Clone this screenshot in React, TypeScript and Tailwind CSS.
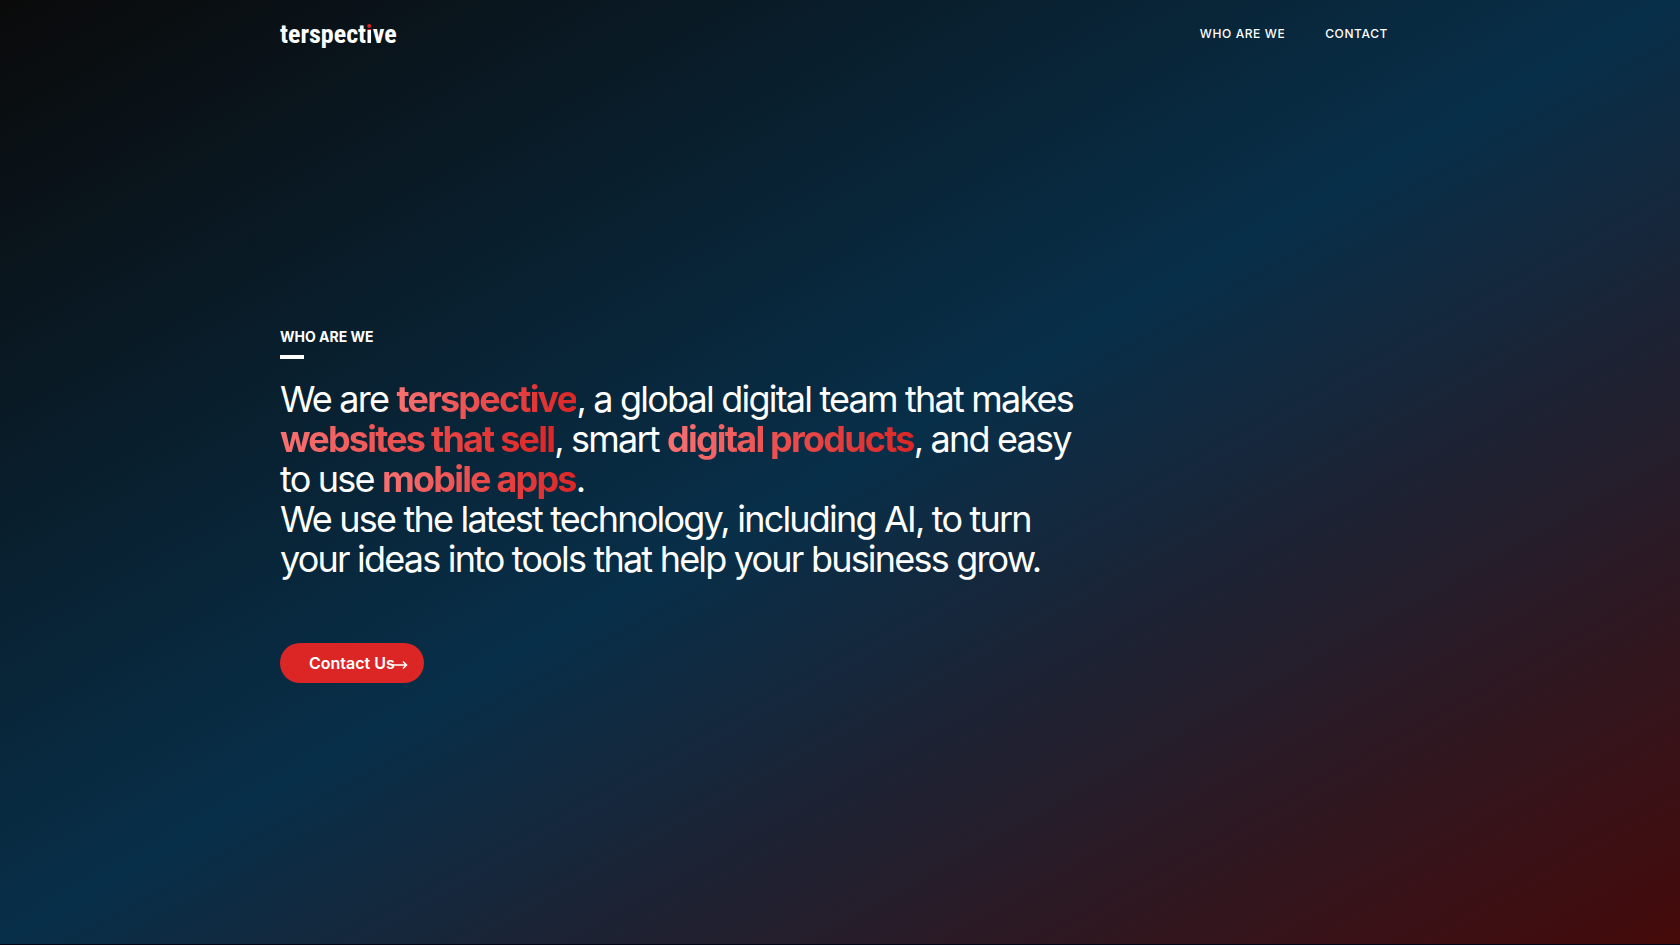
import React from "react";

function Accent({ children }: { children: React.ReactNode }) {
  return (
    <strong className="bg-linear-to-r/srgb from-[#f87171] to-[#dc2626] bg-clip-text font-bold text-transparent">
      {children}
    </strong>
  );
}

function Logo() {
  return (
    <a
      href="#"
      className="font-['Roboto_Condensed','Liberation_Sans_Narrow','Liberation_Sans',sans-serif] text-[26px] leading-8 font-bold text-white"
    >
      terspect
      <span className="bg-linear-to-b from-[#dc2626] from-38% to-white to-38% bg-clip-text text-transparent">i</span>
      ve
    </a>
  );
}

export default function App() {
  return (
    <div className="bg-[#020617] pb-px font-['Inter',sans-serif] text-white">
      <div className="flex min-h-[calc(100vh-1px)] flex-col bg-linear-to-br/srgb from-[#0a0a0a] via-[#082f49] to-[#450a0a]">
        <header className="mx-auto flex h-17 w-full max-w-280 items-center justify-between">
          <Logo />
          <nav className="flex gap-10 pr-3 text-xs font-medium tracking-wider">
            <a href="#who">WHO ARE WE</a>
            <a href="#contact">CONTACT</a>
          </nav>
        </header>
        <main id="who" className="mx-auto flex w-full max-w-280 grow flex-col items-start justify-center pb-0.5">
          <h2 className="text-sm font-bold">WHO ARE WE</h2>
          <span className="mt-2 h-1 w-6 bg-white" />
          <p className="mt-5 max-w-200 text-4xl leading-10 tracking-tighter">
            We are <Accent>terspective</Accent>, a global digital team that makes{" "}
            <Accent>websites that sell</Accent>, smart <Accent>digital products</Accent>, and easy to use{" "}
            <Accent>mobile apps</Accent>.
            <br />
            We use the latest technology, including AI, to turn your ideas into tools that help your business grow.
          </p>
          <a
            id="contact"
            href="#contact"
            className="relative mt-16 flex h-10 w-36 items-center rounded-full bg-[#dc2626] pl-[29px] text-base font-semibold"
          >
            Contact Us
            <svg
              className="absolute top-3.5 right-4 h-4 w-4"
              viewBox="0 0 16 16"
              fill="none"
              stroke="currentColor"
              strokeWidth="1.5"
              aria-hidden="true"
            >
              <path d="M0 8h14.5M11 4.5 14.5 8 11 11.5" />
            </svg>
          </a>
        </main>
      </div>
    </div>
  );
}
